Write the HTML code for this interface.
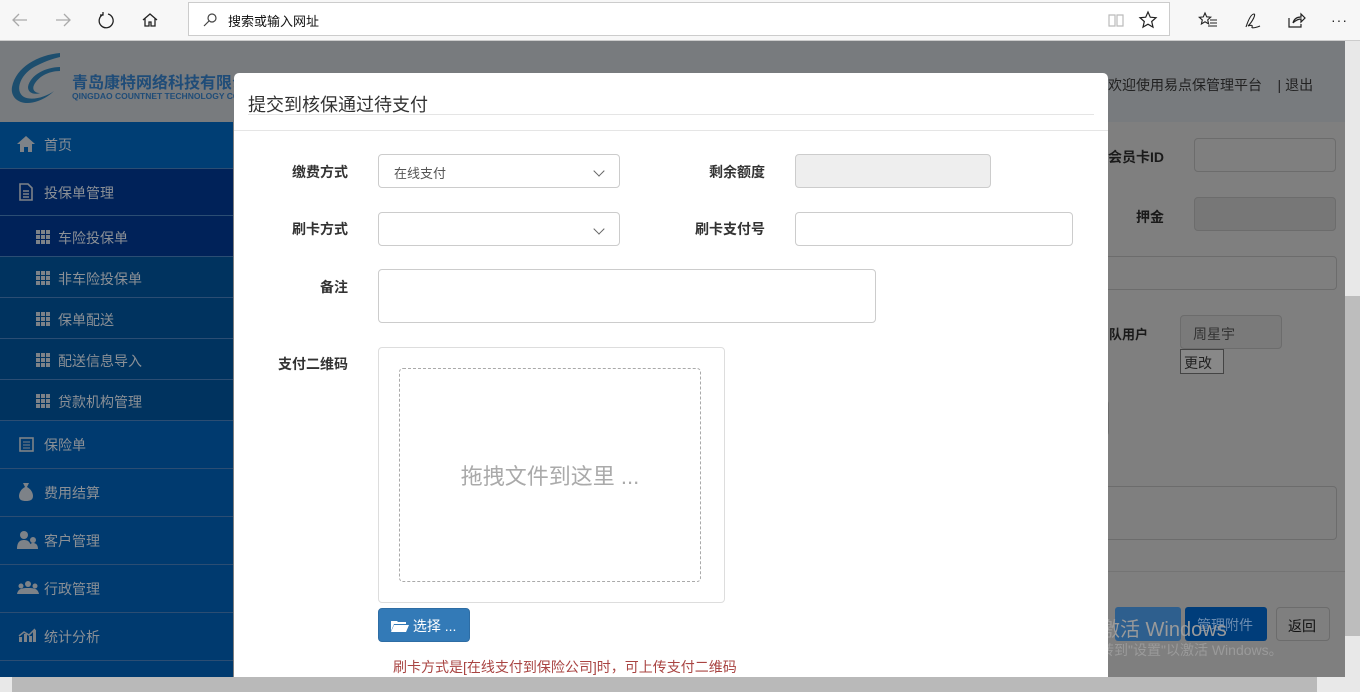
<!DOCTYPE html>
<html><head><meta charset="utf-8">
<style>
*{margin:0;padding:0;box-sizing:border-box}
body{width:1360px;height:692px;overflow:hidden;position:relative;background:#7f7f7f;font-family:"Liberation Sans","Noto Sans CJK SC",sans-serif;font-size:13px}
.a{position:absolute}
.tb{left:0;top:0;width:1360px;height:41px;background:#f7f7f7;border-bottom:1px solid #ccc}
.ico{position:absolute;top:8px;width:24px;height:24px}
.hdr{left:0;top:41px;width:1345px;height:81px;background:#787b7e}
.side{left:0;top:122px;width:233px;height:555px;background:#003a6f}
.it{position:absolute;left:0;width:233px;border-bottom:1px solid #2b4d73;color:#8b9096;font-size:14px}
.it span{position:absolute;left:44px}
.sub span{left:58px}
.grid{position:absolute;left:36px;width:15px;height:14px;background:
linear-gradient(#7d8288,#7d8288) 0 0/4px 4px,linear-gradient(#7d8288,#7d8288) 5px 0/4px 4px,linear-gradient(#7d8288,#7d8288) 10px 0/4px 4px,
linear-gradient(#7d8288,#7d8288) 0 5px/4px 4px,linear-gradient(#7d8288,#7d8288) 5px 5px/4px 4px,linear-gradient(#7d8288,#7d8288) 10px 5px/4px 4px,
linear-gradient(#7d8288,#7d8288) 0 10px/4px 4px,linear-gradient(#7d8288,#7d8288) 5px 10px/4px 4px,linear-gradient(#7d8288,#7d8288) 10px 10px/4px 4px;background-repeat:no-repeat}
.bgin{position:absolute;border:1px solid #6c6c6c;border-radius:4px;background:#7f7f7f}
.modal{left:234px;top:73px;width:874px;height:604px;background:#fff;border-radius:5px 5px 0 0}
.lbl{position:absolute;font-weight:bold;color:#333;font-size:14px;text-align:right;width:120px}
.inp{position:absolute;border:1px solid #ccc;border-radius:4px;background:#fff}
.chev{position:absolute;right:16px;top:12px;width:8px;height:8px;border-right:1px solid #666;border-bottom:1px solid #666;transform:rotate(45deg)}
</style></head><body>
<div class="a tb">
 <svg class="ico" style="left:8px" viewBox="0 0 24 24"><path d="M19 12H5M11 6l-6 6 6 6" fill="none" stroke="#aaa" stroke-width="1.3"/></svg>
 <svg class="ico" style="left:51px" viewBox="0 0 24 24"><path d="M5 12h14M13 6l6 6-6 6" fill="none" stroke="#aaa" stroke-width="1.3"/></svg>
 <svg class="ico" style="left:94px" viewBox="0 0 24 24"><path d="M9 6.5A7 7 0 1 0 14 6" fill="none" stroke="#222" stroke-width="1.3"/><path d="M9 4v3H6" fill="none" stroke="#222" stroke-width="1.3"/></svg>
 <svg class="ico" style="left:138px" viewBox="0 0 24 24"><path d="M5 12l7-6 7 6M7 10v8h4v-4h2v4h4v-8" fill="none" stroke="#222" stroke-width="1.3"/></svg>
 <div class="a" style="left:188px;top:2px;width:982px;height:34px;background:#fff;border:1px solid #ccc"></div>
 <svg class="ico" style="left:198px" viewBox="0 0 24 24"><circle cx="14" cy="10" r="4" fill="none" stroke="#444" stroke-width="1.2"/><path d="M11 13l-5 5" stroke="#444" stroke-width="1.2"/></svg>
 <div class="a" style="left:228px;top:11px;font-size:13px;color:#111">搜索或输入网址</div>
 <svg class="ico" style="left:1104px" viewBox="0 0 24 24"><path d="M5 7h6v11H5zM13 7h6v11h-6z" fill="none" stroke="#bbb" stroke-width="1.2"/></svg>
 <svg class="ico" style="left:1136px" viewBox="0 0 24 24"><path d="M12 4l2.3 5.2 5.7.5-4.3 3.8 1.3 5.6L12 16.2 7 19.1l1.3-5.6L4 9.7l5.7-.5z" fill="none" stroke="#222" stroke-width="1.2"/></svg>
 <svg class="ico" style="left:1196px" viewBox="0 0 24 24"><path d="M9 5l1.7 3.8 4 .4-3 2.7.9 4L9 13.8 5.4 16l.9-4-3-2.7 4-.4z" fill="none" stroke="#222" stroke-width="1.1"/><path d="M14 12h7M14 15h7M12 18h9" stroke="#222" stroke-width="1.1"/></svg>
 <svg class="ico" style="left:1240px" viewBox="0 0 24 24"><path d="M6 19c2-6 5-13 8-13 2 0-1 7-6 12M8 18c3-1 5-1 4 1s6 0 8-1" fill="none" stroke="#222" stroke-width="1.1"/></svg>
 <svg class="ico" style="left:1284px" viewBox="0 0 24 24"><path d="M5 10v9h12v-3M9 15c1-4 4-6 8-6V6l4 4-4 4v-3c-3 0-5 1-8 4" fill="none" stroke="#222" stroke-width="1.2"/></svg>
 <div class="a" style="left:1331px;top:12px;font-size:14px;color:#222;letter-spacing:1px">···</div>
</div>
<div class="a hdr">
 <svg class="a" style="left:8px;top:10px" width="56" height="58" viewBox="0 0 56 58"><path d="M52 2C30 4 8 16 4 36c-2 12 10 20 26 14 6-2 12-6 16-10-8 6-22 10-30 6C6 40 12 22 30 14c8-4 14-6 22-8z" fill="#1d4e6e"/><path d="M52 16c-14 0-30 8-32 20 0 6 6 8 12 6-6 0-8-4-6-8 4-8 14-14 26-14z" fill="#1d4e6e"/></svg>
 <div class="a" style="left:72px;top:28px;font-size:16px;font-weight:bold;color:#1f4c78;letter-spacing:0">青岛康特网络科技有限公司</div>
 <div class="a" style="left:72px;top:50px;font-size:8.5px;font-weight:bold;color:#1f4c78">QINGDAO COUNTNET TECHNOLOGY CO.,LTD</div>
 <div class="a" style="left:1108px;top:34px;font-size:14px;color:#222">欢迎使用易点保管理平台 &nbsp;&nbsp; | 退出</div>
</div>
<div class="a side">
 <div class="it" style="top:0;height:47px;background:#003e74"><svg class="a" style="left:16px;top:13px" width="20" height="18" viewBox="0 0 20 18"><path d="M10 1L1 9h3v8h4v-5h4v5h4V9h3z" fill="#7d8288"/></svg><span style="top:13px">首页</span></div>
 <div class="it" style="top:47px;height:47px;background:#002259"><svg class="a" style="left:19px;top:14px" width="14" height="18"><path d="M1 1h8l4 4v12H1z" fill="none" stroke="#7d8288" stroke-width="1.6"/><path d="M4 8h6M4 11h6M4 14h6" stroke="#7d8288" stroke-width="1.4"/></svg><span style="top:14px">投保单管理</span></div>
 <div class="it sub" style="top:94px;height:41px;background:#002259"><i class="grid" style="top:14px"></i><span style="top:12px">车险投保单</span></div>
 <div class="it sub" style="top:135px;height:41px;background:#00335f"><i class="grid" style="top:14px"></i><span style="top:12px">非车险投保单</span></div>
 <div class="it sub" style="top:176px;height:41px;background:#00335f"><i class="grid" style="top:14px"></i><span style="top:12px">保单配送</span></div>
 <div class="it sub" style="top:217px;height:41px;background:#00335f"><i class="grid" style="top:14px"></i><span style="top:12px">配送信息导入</span></div>
 <div class="it sub" style="top:258px;height:41px;background:#00335f"><i class="grid" style="top:14px"></i><span style="top:12px">贷款机构管理</span></div>
 <div class="it" style="top:299px;height:48px"><svg class="a" style="left:19px;top:16px" width="15" height="15"><rect x="1" y="1" width="13" height="13" fill="none" stroke="#7d8288" stroke-width="1.6"/><path d="M4 5h7M4 8h7M4 11h7" stroke="#7d8288"/></svg><span style="top:14px">保险单</span></div>
 <div class="it" style="top:347px;height:48px"><svg class="a" style="left:18px;top:13px" width="16" height="20"><path d="M5 1h6l-2 4c4 2 6 6 6 9 0 4-3 5-7 5s-7-1-7-5c0-3 2-7 6-9z" fill="#7d8288"/></svg><span style="top:14px">费用结算</span></div>
 <div class="it" style="top:395px;height:48px"><svg class="a" style="left:17px;top:13px" width="22" height="20"><circle cx="7" cy="5" r="4" fill="#7d8288"/><path d="M0 19c0-7 3-9 7-9s7 2 7 9z" fill="#7d8288"/><circle cx="16" cy="10" r="3" fill="#7d8288"/><path d="M12 19c0-5 2-6 4-6s5 1 5 6z" fill="#7d8288"/></svg><span style="top:14px">客户管理</span></div>
 <div class="it" style="top:443px;height:48px"><svg class="a" style="left:17px;top:16px" width="22" height="14"><circle cx="11" cy="3" r="3" fill="#7d8288"/><circle cx="4" cy="5" r="2.5" fill="#7d8288"/><circle cx="18" cy="5" r="2.5" fill="#7d8288"/><path d="M0 13c1-5 4-6 11-6s10 1 11 6z" fill="#7d8288"/></svg><span style="top:14px">行政管理</span></div>
 <div class="it" style="top:491px;height:48px"><svg class="a" style="left:18px;top:14px" width="18" height="16"><path d="M1 15v-5h3v5zM6 15V7h3v8zM11 15V9h3v6zM15 15V3h3v12z" fill="#7d8288"/><path d="M1 9l5-4 5 3 6-6" stroke="#7d8288" stroke-width="1.5" fill="none"/></svg><span style="top:14px">统计分析</span></div>
</div>
<div class="a" style="left:233px;top:122px;width:1112px;height:555px">
 <div class="a" style="left:875px;top:25px;font-weight:bold;font-size:14px;color:#1a1a1a">会员卡ID</div>
 <div class="bgin" style="left:961px;top:16px;width:142px;height:34px"></div>
 <div class="a" style="left:903px;top:85px;font-weight:bold;font-size:14px;color:#1a1a1a">押金</div>
 <div class="bgin" style="left:961px;top:75px;width:142px;height:34px;background:#777"></div>
 <div class="bgin" style="left:860px;top:134px;width:244px;height:34px"></div>
 <div class="a" style="left:876px;top:202px;font-weight:bold;font-size:13px;color:#1a1a1a">队用户</div>
 <div class="bgin" style="left:947px;top:193px;width:102px;height:34px;background:#7a7a7a;color:#333;font-size:14px;padding:8px 0 0 12px">周星宇</div>
 <div class="a" style="left:947px;top:227px;width:44px;height:25px;border:1px solid #444;background:#888;color:#222;font-size:14px;padding:3px 0 0 3px">更改</div>
 <div class="bgin" style="left:860px;top:278px;width:16px;height:36px"></div>
 <div class="bgin" style="left:860px;top:364px;width:244px;height:54px"></div>
 <div class="a" style="left:860px;top:449px;width:252px;height:1px;background:#747474"></div>
 <div class="a" style="left:882px;top:485px;width:66px;height:34px;background:#2e5f8e;border-radius:3px"></div>
 <div class="a" style="left:952px;top:485px;width:82px;height:34px;background:#003d7a;border-radius:3px;color:#6c8cb0;font-size:14px;padding:8px 0 0 12px">管理附件</div>
 <div class="bgin" style="left:1043px;top:485px;width:54px;height:34px;color:#111;font-size:14px;padding:8px 0 0 11px">返回</div>
 <div class="a" style="left:867px;top:491px;font-size:20px;color:#9a9a9a">激活 Windows</div>
 <div class="a" style="left:867px;top:518px;font-size:14px;color:#9a9a9a">转到"设置"以激活 Windows。</div>
</div>
<div class="a modal">
 <div class="a" style="left:14px;top:18px;font-size:18px;color:#333">提交到核保通过待支付</div>
 <div class="a" style="left:14px;top:41px;width:846px;height:1px;background:#e5e5e5"></div>
 <div class="a" style="left:0;top:57px;width:874px;height:1px;background:#e5e5e5"></div>
 <div class="lbl" style="left:-6px;top:89px">缴费方式</div>
 <div class="inp" style="left:144px;top:81px;width:242px;height:34px;color:#555;padding:8px 0 0 15px">在线支付<i class="chev"></i></div>
 <div class="lbl" style="left:411px;top:89px">剩余额度</div>
 <div class="inp" style="left:561px;top:81px;width:196px;height:34px;background:#eee"></div>
 <div class="lbl" style="left:-6px;top:146px">刷卡方式</div>
 <div class="inp" style="left:144px;top:139px;width:242px;height:34px"><i class="chev"></i></div>
 <div class="lbl" style="left:411px;top:146px">刷卡支付号</div>
 <div class="inp" style="left:561px;top:139px;width:278px;height:34px"></div>
 <div class="lbl" style="left:-6px;top:204px">备注</div>
 <div class="inp" style="left:144px;top:196px;width:498px;height:54px"></div>
 <div class="lbl" style="left:-6px;top:281px">支付二维码</div>
 <div class="inp" style="left:144px;top:274px;width:347px;height:256px;border-color:#ddd"></div>
 <div class="a" style="left:165px;top:295px;width:302px;height:214px;border:1px dashed #aaa;border-radius:4px;text-align:center;color:#aaa;font-size:22px;padding-top:90px">拖拽文件到这里 ...</div>
 <div class="a" style="left:144px;top:535px;width:92px;height:34px;background:#337ab7;border:1px solid #2e6da4;border-radius:4px;color:#fff;font-size:14px;padding:7px 0 0 12px"><svg width="18" height="13" viewBox="0 0 18 13" style="vertical-align:-1px"><path d="M0 2h6l1 1h8v2H3L0 12z" fill="#fff"/><path d="M3 6h15l-3 7H0z" fill="#fff"/></svg> 选择 ...</div>
 <div class="a" style="left:159px;top:584px;color:#a94442;font-size:14px">刷卡方式是[在线支付到保险公司]时，可上传支付二维码</div>
</div>
<div class="a" style="left:1345px;top:41px;width:15px;height:636px;background:#e8e8e8"><div class="a" style="left:0;top:255px;width:15px;height:340px;background:#bdbdbd"></div></div>
<div class="a" style="left:0;top:677px;width:1360px;height:15px;background:#b9b9b9"><div class="a" style="left:0;top:0;width:12px;height:15px;background:#e8e8e8"></div><div class="a" style="left:1317px;top:0;width:43px;height:15px;background:#e8e8e8"></div></div>
</body></html>
